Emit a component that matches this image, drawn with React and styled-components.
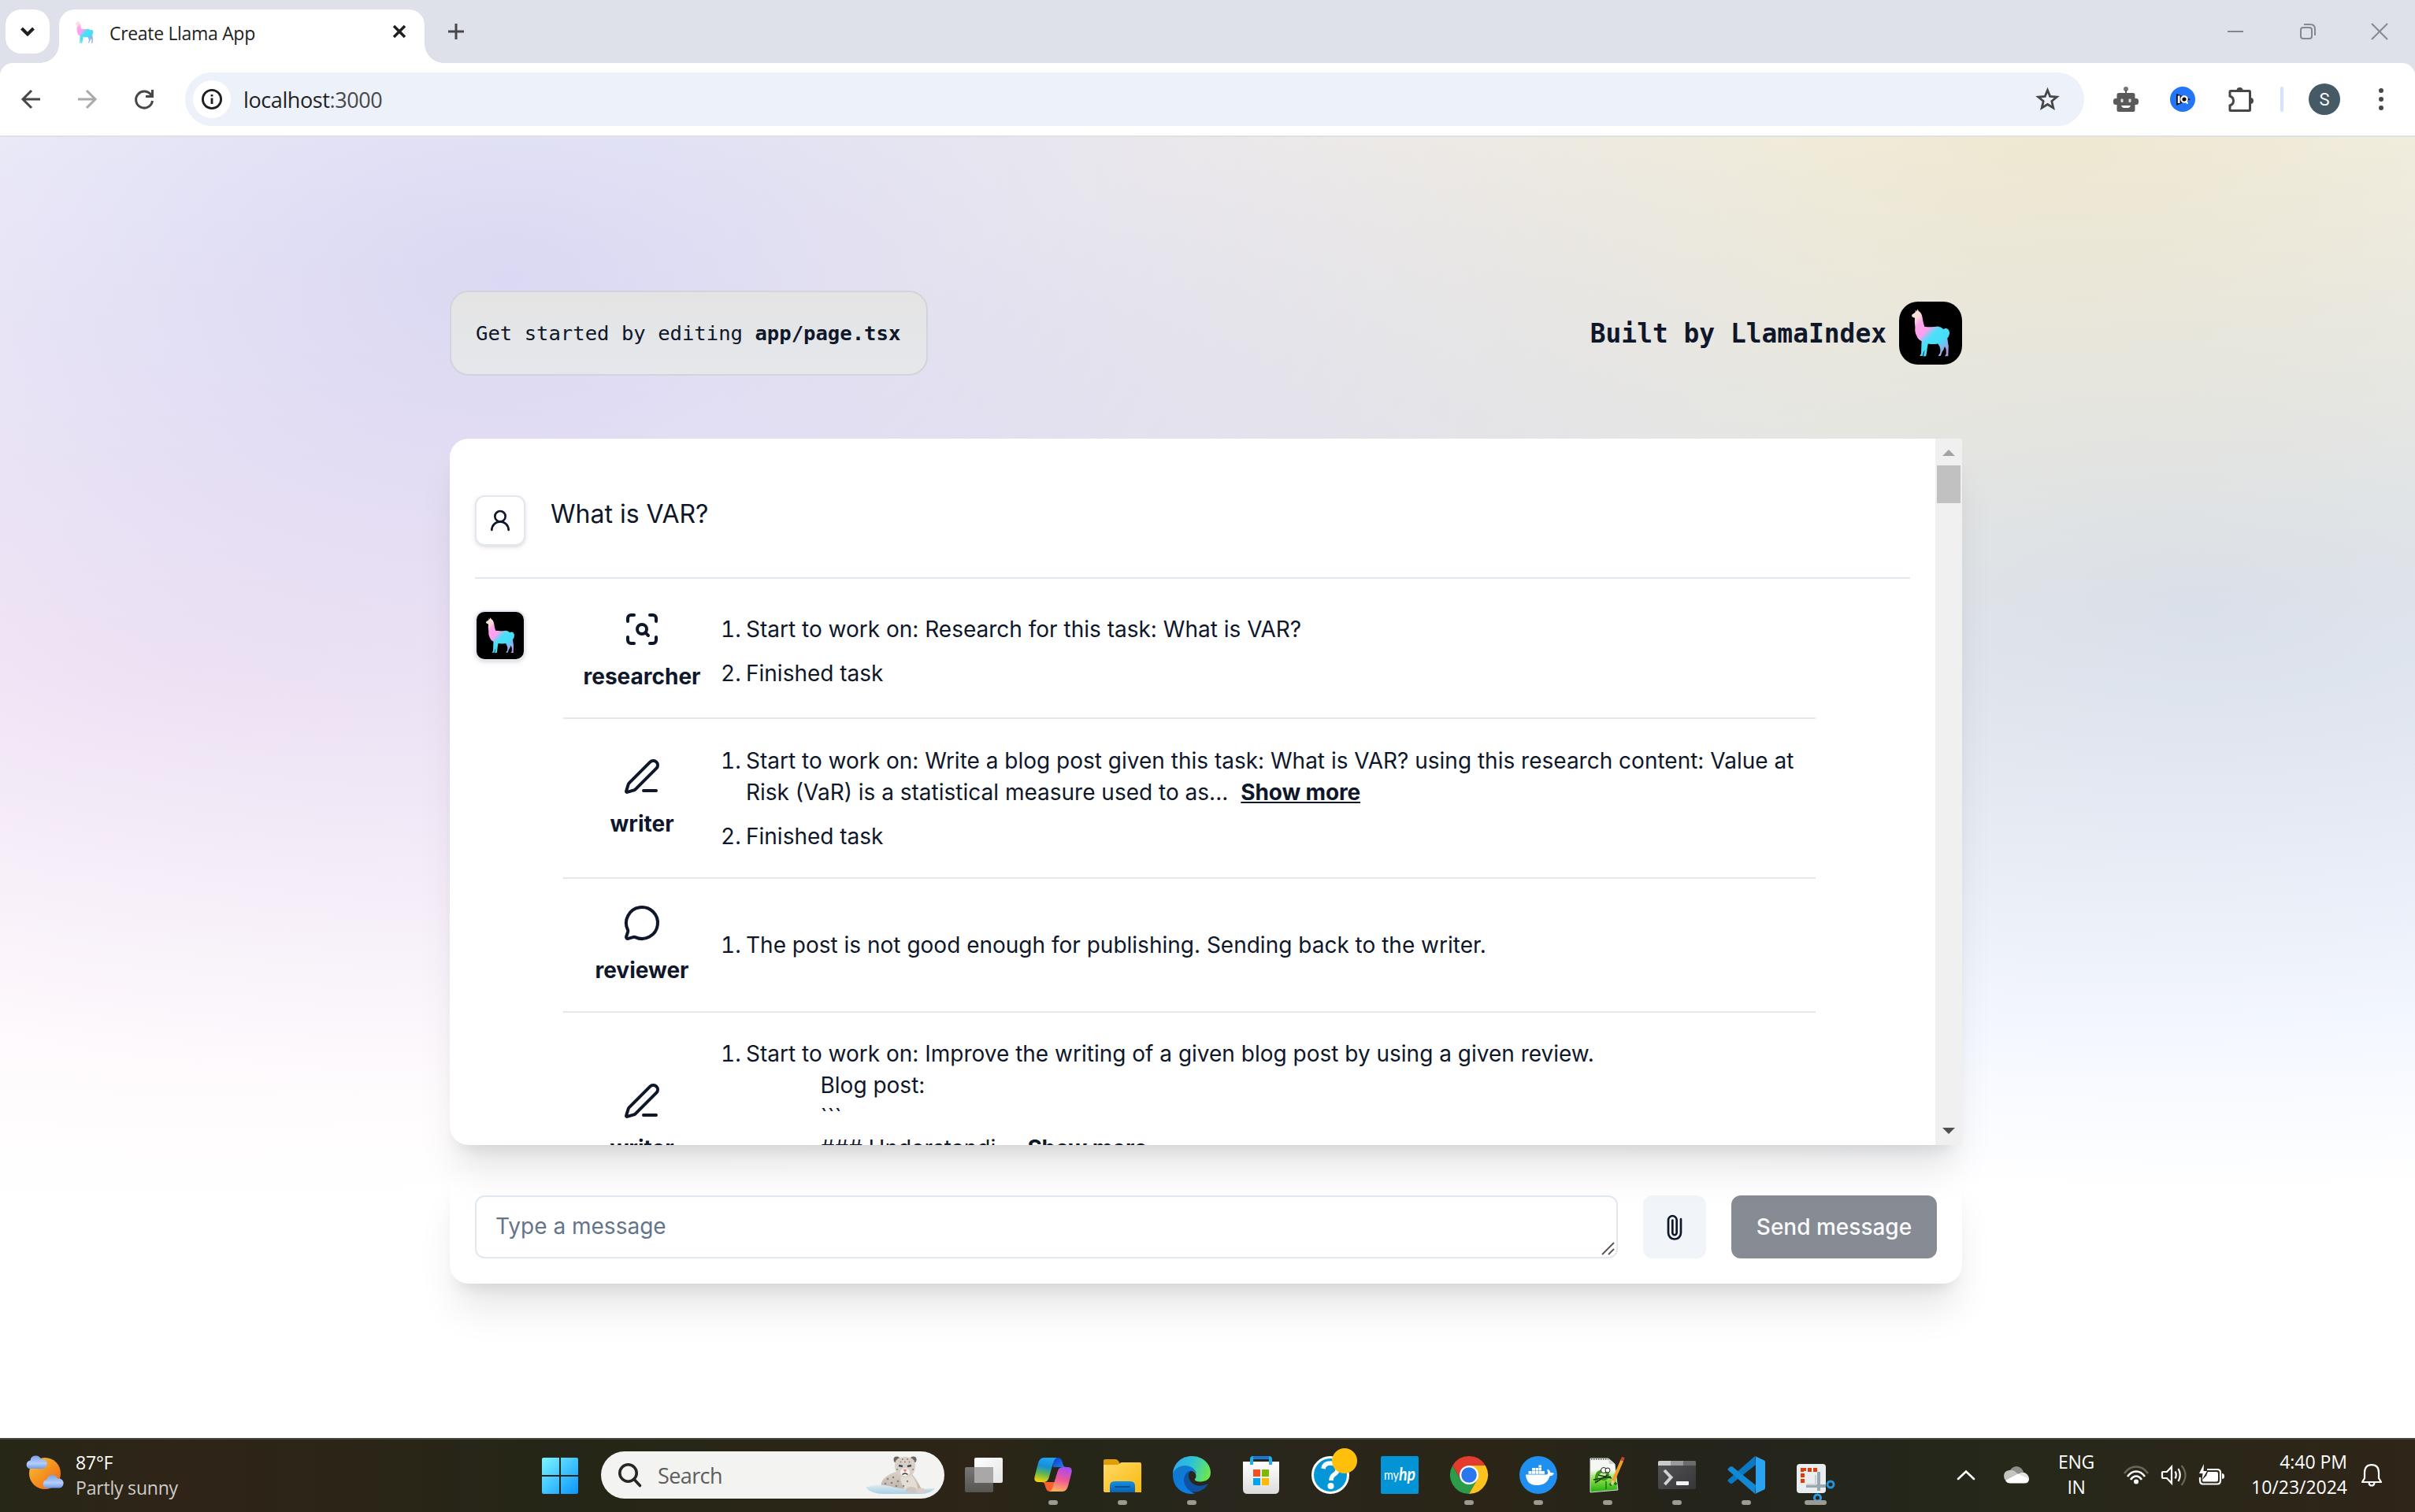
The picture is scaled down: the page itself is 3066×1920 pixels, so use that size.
import React from 'react';
import styled, { createGlobalStyle } from 'styled-components';
import { ScanSearch, PenLine, MessageCircle, UserRound } from 'lucide-react';

const ui = `'Open Sans', 'Noto Sans', sans-serif`;
const inter = `Inter, 'Liberation Sans', sans-serif`;
const mono = `'DejaVu Sans Mono', 'Liberation Mono', monospace`;

const GlobalStyle = createGlobalStyle`
  *, *::before, *::after { box-sizing: border-box; }
  html, body { margin: 0; padding: 0; background: #fff; }
  svg { display: block; flex: none; overflow: visible; }
  button { border: 0; padding: 0; background: none; font: inherit; color: inherit; }
`;

const Screen = styled.div`
  width: 3066px;
  height: 1920px;
  display: flex;
  flex-direction: column;
  overflow: hidden;
  font-family: ${ui};
`;

/* ---------- browser chrome ---------- */

const TabStrip = styled.header`
  height: 80px;
  background: #dee1e9;
  display: flex;
  align-items: flex-start;
  padding: 12px 35px 0 7px;
`;

const TabSearch = styled.button`
  width: 56px;
  height: 56px;
  border-radius: 20px;
  background: #fff;
  display: grid;
  place-items: center;
`;

const Tab = styled.div`
  position: relative;
  width: 464px;
  height: 68px;
  margin-left: 12px;
  padding: 0 24px 12px 20px;
  background: #fff;
  border-radius: 20px 20px 0 0;
  display: flex;
  align-items: center;
  &::before, &::after {
    content: '';
    position: absolute;
    bottom: 0;
    width: 24px;
    height: 24px;
  }
  &::before { left: -24px; background: radial-gradient(circle at 0 0, transparent 23.5px, #fff 24px); }
  &::after { right: -24px; background: radial-gradient(circle at 100% 0, transparent 23.5px, #fff 24px); }
`;

const TabTitle = styled.span`
  flex: 1;
  margin: 4px 0 0 20px;
  font-size: 23px;
  letter-spacing: -0.32px;
  line-height: 32px;
  color: #1f1f1f;
  white-space: nowrap;
`;

const NewTab = styled.div`
  margin: 18px auto 0 30px;
`;

const WindowControls = styled.div`
  display: flex;
  align-items: center;
  gap: 71.5px;
  margin-top: 18px;
`;

const ToolbarBack = styled.div`
  background: #dee1e9;
`;

const Toolbar = styled.div`
  height: 94px;
  background: #fff;
  border-bottom: 2px solid #dfe1e2;
  border-radius: 16px 16px 0 0;
  display: flex;
  align-items: center;
  padding: 0 40px 0 27px;
`;

const NavButtons = styled.div`
  display: flex;
  align-items: center;
  gap: 48px;
  width: 208px;
`;

const Omnibox = styled.div`
  width: 2411px;
  height: 68px;
  border-radius: 34px;
  background: #ecf1fa;
  display: flex;
  align-items: center;
  padding: 0 31px 0 10px;
`;

const SiteInfo = styled.div`
  width: 48px;
  height: 48px;
  border-radius: 50%;
  background: #fff;
  display: grid;
  place-items: center;
`;

const Url = styled.span`
  flex: 1;
  margin-left: 16px;
  font-size: 27px;
  letter-spacing: -0.4px;
  color: #1f1f1f;
  span { color: #474747; }
`;

const Extensions = styled.div`
  display: flex;
  align-items: center;
`;

const Extension = styled.div`
  margin-left: ${(p) => p.$gap}px;
`;

const Separator = styled.i`
  width: 4px;
  height: 32px;
  margin-left: 34px;
  border-radius: 2px;
  background: #d3e3fd;
`;

const Profile = styled.div`
  width: 40px;
  height: 40px;
  margin-left: 32px;
  border-radius: 50%;
  background: #455a64;
  color: #fff;
  font: 22px Roboto, sans-serif;
  display: grid;
  place-items: center;
`;

/* ---------- page ---------- */

const Page = styled.main`
  height: 1652px;
  padding: 195px 0 0 571px;
  background-color: #fff;
  background-image:
    radial-gradient(at 21% 11%, rgba(186, 186, 233, 0.53) 0, transparent 50%),
    radial-gradient(at 85% 0, hsla(46, 57%, 78%, 0.52) 0, transparent 50%),
    radial-gradient(at 91% 36%, rgba(194, 213, 255, 0.68) 0, transparent 50%),
    radial-gradient(at 8% 40%, rgba(251, 218, 239, 0.46) 0, transparent 50%);
  font-family: ${inter};
  color: #0f172a;
`;

const Column = styled.div`
  width: 1920px;
  display: flex;
  flex-direction: column;
`;

const PageHeader = styled.div`
  display: flex;
  justify-content: space-between;
  align-items: center;
  height: 108px;
  margin-bottom: 80px;
  font-family: ${mono};
`;

const Hint = styled.p`
  margin: 0;
  width: 607px;
  height: 108px;
  padding: 0 0 0 31px;
  border: 2px solid #d1d4da;
  border-radius: 24px;
  background: linear-gradient(#e4e4e4, #e5e7eb);
  font-size: 25.6px;
  line-height: 104px;
  white-space: nowrap;
`;

const BuiltBy = styled.div`
  display: flex;
  align-items: center;
  gap: 16px;
  font-size: 32.9px;
  font-weight: 700;
`;

const LogoTile = styled.div`
  width: ${(p) => p.$size}px;
  height: ${(p) => p.$size}px;
  border-radius: ${(p) => p.$radius}px;
  background: #000;
`;

const ChatCard = styled.section`
  position: relative;
  z-index: 1;
  height: 897px;
  display: flex;
  background: #fff;
  border-radius: 24px;
  box-shadow: 0 40px 50px -10px rgba(0, 0, 0, 0.1), 0 16px 20px -12px rgba(0, 0, 0, 0.1);
`;

const Messages = styled.div`
  width: 1886px;
  height: 897px;
  overflow: hidden;
  padding: 0 32px;
  border-radius: 24px 0 0 24px;
`;

const Message = styled.div`
  display: flex;
  align-items: flex-start;
  padding-top: ${(p) => p.$top}px;
`;

const UserMessage = styled(Message)`
  height: 178px;
  border-bottom: 2px solid #e2e8f0;
`;

const Avatar = styled.div`
  width: 64px;
  height: 64px;
  flex: none;
  border: 2px solid #e2e8f0;
  border-radius: 12px;
  background: #fff;
  box-shadow: 0 2px 6px rgba(0, 0, 0, 0.1), 0 2px 4px -2px rgba(0, 0, 0, 0.1);
  display: grid;
  place-items: center;
`;

const Question = styled.p`
  margin: -2px 0 0 32px;
  font-size: 32px;
  line-height: 52px;
`;

const Events = styled.div`
  width: 1590px;
  margin-left: 48px;
`;

const EventRow = styled.div`
  display: flex;
  align-items: center;
  padding-bottom: 32px;
  margin-bottom: 32px;
  border-bottom: 2px solid #e2e8f0;
`;

const Agent = styled.div`
  width: 200px;
  height: 104px;
  flex: none;
  display: flex;
  flex-direction: column;
  align-items: center;
  gap: 16px;
  font-size: 28px;
  line-height: 40px;
  font-weight: 700;
`;

const Steps = styled.ol`
  list-style: none;
  margin: 0;
  padding: 0;
  flex: 1;
  display: flex;
  flex-direction: column;
  gap: 16px;
  font-size: 28px;
  line-height: 40px;
`;

const Step = styled.li`
  display: grid;
  grid-template-columns: 32px 1fr;
  padding-top: ${(p) => (p.$offset ? 1 : 0)}px;
`;

const StepNumber = styled.span`
  font-variant-numeric: tabular-nums;
`;

const StepText = styled.span`
  white-space: pre-wrap;
`;

const ShowMore = styled.a`
  margin-left: 16px;
  font-weight: 700;
  letter-spacing: -0.15px;
  text-decoration: underline;
`;

const ScrollTrack = styled.div`
  width: 34px;
  height: 897px;
  background: #f0f0f0;
  display: flex;
  flex-direction: column;
  align-items: center;
  padding: 14px 0;
`;

const ScrollThumb = styled.i`
  width: 30px;
  height: 48px;
  margin: 12px 0 auto;
  background: #c1c1c1;
`;

const ScrollArrow = styled.i`
  width: 0;
  height: 0;
  border: 8px solid transparent;
  border-${(p) => (p.$down ? 'top' : 'bottom')}-color: ${(p) => (p.$down ? '#505050' : '#a3a3a3')};
  border-${(p) => (p.$down ? 'bottom' : 'top')}-width: 0;
`;

const Composer = styled.form`
  height: 144px;
  margin-top: 32px;
  padding: 32px;
  display: flex;
  gap: 32px;
  background: #fff;
  border-radius: 24px;
  box-shadow: 0 40px 50px -10px rgba(0, 0, 0, 0.1), 0 16px 20px -12px rgba(0, 0, 0, 0.1);
`;

const Field = styled.div`
  width: 1451px;
  height: 80px;
  display: flex;
  justify-content: space-between;
  align-items: flex-end;
  border: 2px solid #e2e8f0;
  border-radius: 12px;
  padding: 0 2px 2px 24px;
  font-size: 28px;
  line-height: 76px;
  color: #64748b;
`;

const Placeholder = styled.span`
  height: 75px;
`;

const Attach = styled.button`
  width: 80px;
  height: 80px;
  border-radius: 12px;
  background: #f1f5f9;
  display: grid;
  place-items: center;
  color: #0f172a;
`;

const Send = styled.button`
  width: 261px;
  height: 80px;
  border-radius: 12px;
  background: #878b94;
  color: #fbfcfd;
  font-size: 28px;
  font-weight: 500;
  white-space: nowrap;
`;

/* ---------- taskbar ---------- */

const Taskbar = styled.footer`
  height: 94px;
  border-top: 2px solid #48483d;
  background: linear-gradient(90deg, #272717 0, #2f2418 240px, #252617 700px, #2d2517 1250px, #252617 1350px, #29261d 1560px, #2a2516 1900px, #24241c 2200px, #26281a 2560px, #2f2518 3066px);
  display: grid;
  grid-template-columns: 688px 1fr auto;
  align-items: start;
  color: #fff;
`;

const Weather = styled.div`
  display: flex;
  gap: 14px;
  padding: 19px 0 0 33px;
`;

const WeatherText = styled.div`
  margin-top: -6px;
  font-size: 23px;
  line-height: 32px;
  letter-spacing: -0.2px;
  small { display: block; font-size: inherit; color: #cfcdc8; }
`;

const Apps = styled.nav`
  display: flex;
  align-items: flex-start;
`;

const StartButton = styled.div`
  width: 75px;
  padding-top: 23px;
`;

const SearchBox = styled.div`
  width: 436px;
  height: 60px;
  margin: 15px 6px 0 0;
  padding: 0 10px 0 22px;
  border-radius: 30px;
  background: #f3f3f1;
  display: flex;
  align-items: center;
  color: #5d5d5d;
  font-size: 27px;
  letter-spacing: -0.6px;
  span { flex: 1; margin-left: 21px; }
`;

const AppSlot = styled.div`
  width: 88px;
  height: 89px;
  padding-top: 21px;
  display: flex;
  flex-direction: column;
  align-items: center;
  justify-content: space-between;
`;

const Running = styled.i`
  width: ${(p) => (p.$active ? 28 : 12)}px;
  height: 6px;
  margin-bottom: 6px;
  border-radius: 3px;
  background: #9c9a93;
`;

const Tray = styled.div`
  display: flex;
  align-items: center;
  height: 90px;
  padding-right: 42px;
`;

const TrayItem = styled.div`
  margin-left: ${(p) => p.$gap}px;
`;

const TrayText = styled.div`
  width: ${(p) => p.$width}px;
  margin: 0 0 3px ${(p) => p.$gap}px;
  font-size: 23px;
  line-height: 32px;
  letter-spacing: ${(p) => p.$track || 0}px;
  text-align: ${(p) => p.$align};
  white-space: nowrap;
`;

/* ---------- drawings ---------- */

const Llama = ({ size, height = size, id, box = '0 0 80 80' }) => (
  <svg width={size} height={height} viewBox={box}>
    <defs>
      <linearGradient id={id} gradientUnits="userSpaceOnUse" x1="22" y1="19" x2="66" y2="62">
        <stop offset="0" stopColor="#fadfda" />
        <stop offset="0.04" stopColor="#fbd6dc" />
        <stop offset="0.14" stopColor="#ffa6ea" />
        <stop offset="0.34" stopColor="#ff9ff0" />
        <stop offset="0.5" stopColor="#4be0f7" />
        <stop offset="0.7" stopColor="#45defa" />
        <stop offset="0.95" stopColor="#b297e0" />
      </linearGradient>
    </defs>
    <path
      fill={`url(#${id})`}
      d="M20.6 13.6 20.9 10.8 22.3 12.6 23.4 9.6 24.8 12Q28.6 14 29.6 20Q30.5 27 32.2 31.8Q41 33 49.4 31.6Q54 32.2 56.3 35Q59.5 32.8 62.2 35Q65 38.5 63.6 42.5Q62.8 45 61.3 46.5Q62 52 62.8 56.5L62.3 69.2 58 69.3 59.8 66.5 59.7 60.5 58 57Q56.5 61.5 54.6 64L52.8 69 49.6 69 52 65.2Q53.6 59.5 49.4 53.4Q43 54.5 36.8 53.4Q35.6 58 35.3 63L34.2 69.3 30.8 69.4 32.6 61.5 30.8 65 30 69 26.2 68.9 28 66 28.6 50.2Q23.8 48 22.6 44Q19.6 39 20.4 32.5Q19.4 26 20 20.8L17.3 19.8Q15.6 18.6 16.2 16.8Z"
    />
  </svg>
);

const Stroke = ({ w, h = w, color = '#474747', sw = 3, cap = 'butt', children }) => (
  <svg width={w} height={h} viewBox={`0 0 ${w} ${h}`} fill="none" stroke={color} strokeWidth={sw} strokeLinecap={cap}>
    {children}
  </svg>
);

const Robot = () => (
  <svg width="32" height="32" viewBox="0 0 32 32" fill="#5a5a5a">
    <circle cx="16" cy="3" r="3" fill="#777" />
    <rect x="15" y="4" width="2" height="5" />
    <rect x="4.500" y="8" width="23" height="24" rx="2.500" />
    <rect x="0" y="15" width="32" height="8" rx="3" />
    <rect x="9.500" y="15.500" width="3" height="4.500" rx="1" fill="#ddd" />
    <rect x="19.500" y="15.500" width="3" height="4.500" rx="1" fill="#ddd" />
    <path d="M10 24H22Q21 27 19 27H13Q11 27 10 24Z" fill="#fff" />
  </svg>
);

const IqBadge = () => (
  <svg width="32" height="32" viewBox="0 0 32 32">
    <circle cx="16" cy="16" r="16" fill="#2575f8" />
    <path d="M8 9 26 16 8 24Z" fill="#05070c" />
    <rect x="9.800" y="11.500" width="2.800" height="9.500" fill="#fff" />
    <circle cx="18" cy="16" r="3.700" fill="#05070c" stroke="#fff" strokeWidth="2.200" />
    <path d="M19.500 18.500 22.500 21.500" stroke="#fff" strokeWidth="2.200" />
  </svg>
);

const Puzzle = () => (
  <svg width="32" height="32" viewBox="0 0 32 32">
    <path d="M2 6.500Q2 5.500 3 5.500H27Q27.500 5.500 27.500 6.500V29.500Q27.500 30.500 26.500 30.500H3Q2 30.500 2 29.500V24Q6.500 22.500 6.500 18Q6.500 13.500 2 12Z" fill="none" stroke="#474747" strokeWidth="3" />
    <path d="M10.500 5A4 4 0 0 1 18.500 5ZM28 14A4 4 0 0 1 28 22Z" fill="#474747" />
  </svg>
);

const WeatherIcon = () => (
  <svg width="49" height="46" viewBox="0 0 49 46">
    <defs>
      <linearGradient id="sun" x1="0" y1="0" x2="1" y2="1"><stop offset="0.2" stopColor="#f7b02c" /><stop offset="1" stopColor="#f0600e" /></linearGradient>
      <linearGradient id="cloud" x1="0" y1="0" x2="0" y2="1"><stop offset="0" stopColor="#7c9fe8" /><stop offset="0.6" stopColor="#b4cffa" /><stop offset="1" stopColor="#7199e8" /></linearGradient>
    </defs>
    <circle cx="24" cy="24" r="20" fill="url(#sun)" />
    <path d="M5 18A5.500 5.500 0 0 1 6.500 7.500A7 7 0 0 1 20 6A6 6 0 0 1 23 18Z" fill="url(#cloud)" transform="translate(-1 0)" />
    <path d="M5 18A5.500 5.500 0 0 1 6.500 7.500A7 7 0 0 1 20 6A6 6 0 0 1 23 18Z" fill="url(#cloud)" transform="translate(20 24.500)" />
  </svg>
);

const WindowsLogo = () => (
  <svg width="46" height="46" viewBox="0 0 46 46">
    <defs><linearGradient id="win" gradientUnits="userSpaceOnUse" x1="0" y1="0" x2="46" y2="46"><stop offset="0" stopColor="#7df5ff" /><stop offset="0.5" stopColor="#42c4ff" /><stop offset="1" stopColor="#0a96ff" /></linearGradient></defs>
    <path fill="url(#win)" d="M2 0H22V22H0V2Q0 0 2 0ZM24 0H44Q46 0 46 2V22H24ZM0 24H22V46H2Q0 46 0 44ZM24 24H46V44Q46 46 44 46H24Z" />
  </svg>
);

const Leopard = () => (
  <svg width="90" height="48" viewBox="0 0 90 48">
    <defs>
      <linearGradient id="ice" x1="0" y1="0" x2="0" y2="1"><stop offset="0" stopColor="#dcebf4" /><stop offset="1" stopColor="#a9cfe4" /></linearGradient>
      <linearGradient id="fur" x1="0" y1="0" x2="0" y2="1"><stop offset="0" stopColor="#d9cfc4" /><stop offset="1" stopColor="#bcb0a8" /></linearGradient>
    </defs>
    <path d="M20 44C17 32 24 25 38 20L58 22C66 30 68 38 74 46L40 47Z" fill="url(#fur)" />
    <path d="M0 40Q14 34 30 38Q48 44 88 41Q82 48 70 48H22Q8 48 0 40Z" fill="url(#ice)" />
    <path d="M44 24H58Q66 34 66 42L50 43Q44 34 44 24Z" fill="#e4ddd5" />
    <ellipse cx="58" cy="43" rx="7" ry="4" fill="#cfc5bd" />
    <ellipse cx="70" cy="44" rx="6" ry="3.500" fill="#d8cfc8" />
    <circle cx="39.500" cy="4.500" r="4" fill="#6c655f" />
    <circle cx="60.500" cy="4.500" r="4" fill="#6c655f" />
    <path d="M37 12Q37 1 50 1Q63 1 63 12Q63 26 50 27Q37 26 37 12Z" fill="#d8d0c7" />
    <ellipse cx="50" cy="20.500" rx="6" ry="5" fill="#f4f0ec" />
    <path d="M42 12L47 13M58 12L53 13" stroke="#38495c" strokeWidth="2.600" />
    <path d="M47.500 17H52.500L50 20.500Z" fill="#e8796f" />
    <path d="M46.500 23.500Q50 20.500 53.500 23.500" fill="none" stroke="#33302f" strokeWidth="1.500" />
    <g fill="#8a8079">
      <circle cx="47" cy="4" r="1" /><circle cx="53" cy="4" r="1" /><circle cx="50" cy="7.500" r="1" /><circle cx="44.500" cy="7.500" r="1" /><circle cx="55.500" cy="7.500" r="1" /><circle cx="40" cy="17" r="1" /><circle cx="60" cy="17" r="1" />
      <circle cx="28" cy="29" r="1.300" /><circle cx="35" cy="27" r="1.300" /><circle cx="25" cy="35" r="1.300" /><circle cx="33" cy="34" r="1.300" /><circle cx="41" cy="32" r="1.300" /><circle cx="53" cy="32" r="1.200" /><circle cx="39" cy="38" r="1.300" /><circle cx="48" cy="38" r="1.200" />
    </g>
  </svg>
);

const TaskView = () => (
  <svg width="48" height="48" viewBox="0 0 48 48">
    <defs>
      <linearGradient id="tvw" x1="0" y1="0" x2="1" y2="1"><stop offset="0" stopColor="#fff" /><stop offset="1" stopColor="#e4e4e4" /></linearGradient>
      <linearGradient id="tvg" x1="0" y1="0" x2="0" y2="1"><stop offset="0" stopColor="#777674" /><stop offset="1" stopColor="#565552" /></linearGradient>
    </defs>
    <rect x="0" y="14" width="36" height="32" rx="2" fill="url(#tvg)" />
    <rect x="12" y="2" width="36" height="32" rx="2" fill="url(#tvw)" />
    <path d="M12 14H36V34H14Q12 34 12 32Z" fill="#a9a8a6" />
  </svg>
);

const Copilot = () => (
  <svg width="48" height="48" viewBox="0 0 48 48">
    <defs>
      <linearGradient id="cpa" x1="0.500" y1="0" x2="0.300" y2="1"><stop offset="0" stopColor="#1fa5ee" /><stop offset="0.350" stopColor="#168fd8" /><stop offset="0.650" stopColor="#5fb552" /><stop offset="1" stopColor="#fbd20a" /></linearGradient>
      <linearGradient id="cpb" x1="0.600" y1="0" x2="0.400" y2="1"><stop offset="0" stopColor="#a64bf0" /><stop offset="0.500" stopColor="#f0569a" /><stop offset="1" stopColor="#fdb25a" /></linearGradient>
      <linearGradient id="cpc" x1="0" y1="0" x2="1" y2="1"><stop offset="0" stopColor="#1536c8" /><stop offset="1" stopColor="#1b8af2" /></linearGradient>
    </defs>
    <path d="M24 2H30Q34 2 35.500 7L37 12Q38 14 41 14H24Z" fill="url(#cpc)" />
    <path d="M26 45H20Q16 45 14.500 40L13 35Q12 33 9 33H26Z" fill="#f9602f" />
    <path d="M23 14H31L25.500 33H17.500Z" fill="#272617" />
    <path d="M12 2H29Q25.500 3 24 9L18.500 28Q17 33 12 33H5Q-1 33 .6 26L5 9Q7 2 12 2Z" fill="url(#cpa)" />
    <path d="M36 45H19Q22.500 44 24 38L29.500 20Q31 14 36 14H43Q49 14 47.400 21L43 38Q41 45 36 45Z" fill="url(#cpb)" />
  </svg>
);

const Folder = () => (
  <svg width="48" height="48" viewBox="0 0 48 48">
    <defs>
      <linearGradient id="fo" x1="0" y1="0" x2="1" y2="1"><stop offset="0" stopColor="#ffd968" /><stop offset="1" stopColor="#f9b90c" /></linearGradient>
      <linearGradient id="fb" x1="0" y1="0" x2="0" y2="1"><stop offset="0" stopColor="#1390e0" /><stop offset="1" stopColor="#0862b5" /></linearGradient>
    </defs>
    <path d="M0 6Q0 4 2 4H15Q18 4 20 8L22 12H0Z" fill="#e19d06" />
    <path d="M0 11H17Q19 11 20.500 9.500Q21.500 8 23 8H46Q48 8 48 10V46H2Q0 46 0 44Z" fill="url(#fo)" />
    <path d="M8 46V38Q8 32 14 32H34Q40 32 40 38V46Z" fill="url(#fb)" />
    <rect x="14" y="38" width="20" height="2" rx="1" fill="#0a4c92" />
  </svg>
);

const Edge = () => (
  <svg width="48" height="48" viewBox="0 0 48 48">
    <defs>
      <linearGradient id="eg" x1="0" y1="0.300" x2="1" y2="0.600"><stop offset="0" stopColor="#2fa6ee" /><stop offset="0.450" stopColor="#2fc3d6" /><stop offset="1" stopColor="#6be84a" /></linearGradient>
      <linearGradient id="eb" x1="0" y1="0" x2="0.600" y2="1"><stop offset="0" stopColor="#1277c8" /><stop offset="1" stopColor="#0a7fe6" /></linearGradient>
    </defs>
    <path d="M0 22C1 9 11 0 24 0C38 0 48 10 48 21C48 29 42 32.500 35 32.500C30 32.500 27 31 28 29C30 27 30 24 28 21C25 17 12 12 0 22Z" fill="url(#eg)" />
    <path d="M0 22C4 12 17 9 25 15C28 17.500 30 20 30 22C26 17 18 18 16 25C14 34 18 44 28 47.500C13 50 -1 40 0 22Z" fill="url(#eb)" />
    <path d="M24 18C14 20 10 32 19 42C27 50 39 44 44.500 36C44 35 43 35.500 42 36C31 41 20 34 20 25C20 22 21.500 19.500 24 18Z" fill="#0f52a4" />
  </svg>
);

const Store = () => (
  <svg width="48" height="48" viewBox="0 0 48 48">
    <defs><linearGradient id="st" x1="0" y1="0" x2="0" y2="1"><stop offset="0" stopColor="#fff" /><stop offset="1" stopColor="#dcdcdc" /></linearGradient></defs>
    <path d="M1 7H47V42Q47 48 41 48H7Q1 48 1 42Z" fill="url(#st)" />
    <path d="M12 11V4Q12 2 14 2H34Q36 2 36 4V11" fill="none" stroke="#1fb0f4" strokeWidth="4" />
    <path d="M14 2H34" stroke="#1673d6" strokeWidth="3.500" />
    <path d="M14 17H23V26H14Z" fill="#f25022" /><path d="M25 17H34V26H25Z" fill="#7fba00" />
    <path d="M14 28H23V37H14Z" fill="#00a4ef" /><path d="M25 28H34V37H25Z" fill="#ffb900" />
  </svg>
);

const Help = () => (
  <svg width="48" height="48" viewBox="0 0 48 48">
    <circle cx="24" cy="24" r="22.500" fill="#0496d6" stroke="#fff" strokeWidth="3" />
    <path d="M15 16Q16 9 24 9Q33 9 33 17Q33 21 28 24Q25 26 25 31" fill="none" stroke="#fff" strokeWidth="5.500" />
    <circle cx="24.500" cy="38" r="4" fill="#fff" />
    <circle cx="42" cy="6" r="16" fill="#ffbf0b" />
  </svg>
);

const MyHp = () => (
  <svg width="48" height="48" viewBox="0 0 48 48">
    <rect width="48" height="48" rx="2" fill="#0294d4" />
    <text x="4" y="30" fill="#fff" fontFamily="Lato, sans-serif" fontSize="17" textLength="19" lengthAdjust="spacingAndGlyphs">my</text>
    <text x="23" y="31" fill="#fff" fontFamily="Lato, sans-serif" fontStyle="italic" fontWeight="700" fontSize="23" textLength="21" lengthAdjust="spacingAndGlyphs">hp</text>
  </svg>
);

const Chrome = () => (
  <svg width="48" height="48" viewBox="0 0 48 48">
    <path d="M13.600 30 3.200 12A24 24 0 0 0 24 48L34.400 30Z" fill="#2a9c4a" />
    <path d="M3.200 12A24 24 0 0 1 44.800 12H24L13.600 30Z" fill="#e33b2e" />
    <path d="M34.400 30 24 48A24 24 0 0 0 44.800 12H24Z" fill="#fcc31e" />
    <circle cx="24" cy="24" r="12" fill="#fff" />
    <circle cx="24" cy="24" r="9.800" fill="#2b78ee" />
  </svg>
);

const Docker = () => (
  <svg width="48" height="48" viewBox="0 0 48 48">
    <circle cx="24" cy="24" r="24" fill="#1f8ff0" />
    <g fill="#fff">
      <path d="M8 23.500H34Q37 23 36 20.500Q34.500 18 36 16.500Q39 18 39.500 21Q42 20.500 44 22Q42.500 25 38.500 25.500Q35 37 22 37Q9 37 8 23.500Z" />
      <path d="M11.500 19H15.500V22.700H11.500ZM16 19H20V22.700H16ZM20.500 19H24.500V22.700H20.500ZM25 19H29V22.700H25ZM29 19H32V22.700H29ZM16 15H20V18.500H16ZM20.500 15H24.500V18.500H20.500ZM25 15H28V18.500H25ZM24.500 11.500H28V14.500H24.500Z" />
    </g>
  </svg>
);

const NotepadPP = () => (
  <svg width="48" height="48" viewBox="0 0 48 48">
    <defs><linearGradient id="np" x1="0" y1="0" x2="0" y2="1"><stop offset="0.350" stopColor="#f4f7f2" /><stop offset="0.600" stopColor="#8fe04a" /><stop offset="1" stopColor="#1fae0e" /></linearGradient></defs>
    <path d="M2 3H25L33 10 37 43 2 46Z" fill="url(#np)" stroke="#ddd" />
    <path d="M25 3 26 10 33 10Z" fill="#cfd3cf" />
    <path d="M3 4H25" stroke="#777" strokeWidth="2" strokeDasharray="1.500 1.500" />
    <path d="M10 33Q8 20 18 19Q25 19 24 26Q20 31 16 28" fill="none" stroke="#3d9a17" strokeWidth="4" />
    <path d="M6 30 28 26M8 34 24 24M12 24 29 28" stroke="#1d3a12" strokeWidth="1.500" />
    <circle cx="19" cy="18" r="3.500" fill="#fff" stroke="#222" />
    <circle cx="24" cy="18" r="3" fill="#fff" stroke="#222" />
    <path d="M22 32V42M26 36H30M28 34V38M32 35H36M34 33V37" stroke="#17720b" strokeWidth="1.500" />
    <path d="M42.500 5 30 34" stroke="#f1a222" strokeWidth="4" />
    <path d="M44 1.500 42 6" stroke="#c7423d" strokeWidth="4" />
    <path d="M31 31 29.500 36.500" stroke="#e8caa0" strokeWidth="3" />
  </svg>
);

const Terminal = () => (
  <svg width="48" height="48" viewBox="0 0 48 48">
    <defs><linearGradient id="te" x1="0" y1="0" x2="1" y2="1"><stop offset="0" stopColor="#545456" /><stop offset="1" stopColor="#373739" /></linearGradient></defs>
    <rect y="6" width="48" height="36" rx="2" fill="url(#te)" />
    <path d="M0 12V8Q0 6 2 6H16V12Z" fill="#cacaca" /><path d="M16 6H32V12H16Z" fill="#9a9a9a" /><path d="M32 6H46Q48 6 48 8V12H32Z" fill="#6b6b6b" />
    <path d="M8 18 16.500 27 8.500 36" fill="none" stroke="#d2d2d2" strokeWidth="4" />
    <rect x="23" y="32" width="16" height="5" rx="1" fill="#f2f2f2" />
  </svg>
);

const VsCode = () => (
  <svg width="48" height="48" viewBox="0 0 48 48">
    <path d="M36 11 6.500 34.500Q5 35.500 3.500 34.500L.8 32Q0 31 1 30L35 0Z" fill="#0a78c4" />
    <path d="M36 37 6.500 13.500Q5 12.500 3.500 13.500L.8 16Q0 17 1 18L35 48Z" fill="#1389d6" />
    <path d="M35 0 46.500 5.200Q48 6 48 8V40Q48 42 46.500 42.800L35 48Q36 47 36 45V3Q36 1 35 0Z" fill="#28a4f2" />
  </svg>
);

const Snip = () => (
  <svg width="48" height="48" viewBox="0 0 48 48">
    <rect x="0" y="10" width="37" height="37" rx="4" fill="#e9edf0" />
    <path d="M5 15H12V19H9V20H5ZM14 15H19V20H14ZM21 15H26V20H21ZM5 22H10V27H5ZM5 29H10V34H5Z" fill="#db3d0c" />
    <path d="M28 20V44M12 38H37" stroke="#9ba7ae" strokeWidth="4" fill="none" />
    <path d="M24 24V36H12" stroke="#cdd3d6" strokeWidth="2" fill="none" />
    <circle cx="43" cy="36" r="4" fill="none" stroke="#2492d8" strokeWidth="3" />
    <circle cx="26.500" cy="53" r="4" fill="none" stroke="#2a9be8" strokeWidth="3" />
  </svg>
);

const apps = [
  { icon: TaskView },
  { icon: Copilot, running: true },
  { icon: Folder, running: true },
  { icon: Edge, running: true },
  { icon: Store },
  { icon: Help },
  { icon: MyHp },
  { icon: Chrome, running: true },
  { icon: Docker, running: true },
  { icon: NotepadPP, running: true },
  { icon: Terminal, running: true },
  { icon: VsCode, running: true },
  { icon: Snip, running: true, active: true },
];

const indent = ' '.repeat(12);

const events = [
  { icon: ScanSearch, name: 'researcher', steps: [{ text: 'Start to work on: Research for this task: What is VAR?' }, { text: 'Finished task' }] },
  {
    icon: PenLine,
    name: 'writer',
    steps: [
      { text: 'Start to work on: Write a blog post given this task: What is VAR? using this research content: Value at Risk (VaR) is a statistical measure used to as...', more: true, offset: true },
      { text: 'Finished task' },
    ],
  },
  { icon: MessageCircle, name: 'reviewer', steps: [{ text: 'The post is not good enough for publishing. Sending back to the writer.' }] },
  {
    icon: PenLine,
    name: 'writer',
    steps: [
      { text: `Start to work on: Improve the writing of a given blog post by using a given review.\n${indent}Blog post:\n${indent}\`\`\`\n${indent}### Understandi...`, more: true },
      { text: 'Finished task' },
    ],
  },
];

function BrowserChrome() {
  return (
    <>
      <TabStrip>
        <TabSearch>
          <Stroke w={18} h={12} color="#1f1f1f" sw={4}><path d="M1.500 2 9 9.500 16.500 2" /></Stroke>
        </TabSearch>
        <Tab>
          <Llama size={24} height={29} id="fav" box="15.5 9 49 61" />
          <TabTitle>Create Llama App</TabTitle>
          <Stroke w={16} color="#1f1f1f" sw={3.4}><path d="M1 1 15 15M15 1 1 15" /></Stroke>
        </Tab>
        <NewTab><Stroke w={20} color="#474747"><path d="M10 0V20M0 10H20" /></Stroke></NewTab>
        <WindowControls>
          <Stroke w={20} color="#86888c" sw={2}><path d="M0 10H20" /></Stroke>
          <Stroke w={20} color="#86888c" sw={2}>
            <rect x="1" y="5" width="14" height="14" rx="3" />
            <path d="M5 1H13Q19 1 19 7V15" />
          </Stroke>
          <Stroke w={20} color="#86888c" sw={2}><path d="M0 0 20 20M20 0 0 20" /></Stroke>
        </WindowControls>
      </TabStrip>
      <ToolbarBack>
        <Toolbar>
          <NavButtons>
            <Stroke w={24}><path d="M24 12H2M13 1 2 12 13 23" /></Stroke>
            <Stroke w={24} color="#a9a9a9"><path d="M0 12H22M11 1 22 12 11 23" /></Stroke>
            <Stroke w={24}><path d="M21 7A10.500 10.500 0 1 0 22.500 14M22.500 0V8.500H14" /></Stroke>
          </NavButtons>
          <Omnibox>
            <SiteInfo>
              <Stroke w={26} color="#1f1f1f" sw={2.8}>
                <circle cx="13" cy="13" r="11.600" />
                <path d="M13 11.500V19M13 7V9.600" />
              </Stroke>
            </SiteInfo>
            <Url>localhost<span>:3000</span></Url>
            <Stroke w={31} h={30} sw={2.800}>
              <path d="M15.500 3.500 18.700 11.300 27.300 12 20.800 17.500 22.800 26 15.500 21.500 8.200 26 10.200 17.500 3.700 12 12.300 11.300Z" />
            </Stroke>
          </Omnibox>
          <Extensions>
            <Extension $gap={37}><Robot /></Extension>
            <Extension $gap={40}><IqBadge /></Extension>
            <Extension $gap={42}><Puzzle /></Extension>
            <Separator />
            <Profile>S</Profile>
            <Extension $gap={49}>
              <svg width="6" height="30" viewBox="0 0 6 30" fill="#474747">
                <circle cx="3" cy="4" r="3" /><circle cx="3" cy="15" r="3" /><circle cx="3" cy="26" r="3" />
              </svg>
            </Extension>
          </Extensions>
        </Toolbar>
      </ToolbarBack>
    </>
  );
}

function ChatPage() {
  return (
    <Page>
      <Column>
        <PageHeader>
          <Hint>Get started by editing <b>app/page.tsx</b></Hint>
          <BuiltBy>
            Built by LlamaIndex
            <LogoTile $size={80} $radius={24}><Llama size={80} id="logo" /></LogoTile>
          </BuiltBy>
        </PageHeader>
        <ChatCard>
          <Messages>
            <UserMessage $top={72}>
              <Avatar><UserRound size={32} strokeWidth={2} /></Avatar>
              <Question>What is VAR?</Question>
            </UserMessage>
            <Message $top={40}>
              <Avatar><LogoTile $size={60} $radius={10}><Llama size={60} id="bot" /></LogoTile></Avatar>
              <Events>
                {events.map(({ icon: Icon, name, steps }, i) => (
                  <EventRow key={i}>
                    <Agent><Icon size={48} strokeWidth={2} />{name}</Agent>
                    <Steps>
                      {steps.map((s, n) => (
                        <Step key={n} $offset={s.offset}>
                          <StepNumber>{n + 1}.</StepNumber>
                          <StepText>{s.text}{s.more && <ShowMore>Show more</ShowMore>}</StepText>
                        </Step>
                      ))}
                    </Steps>
                  </EventRow>
                ))}
              </Events>
            </Message>
          </Messages>
          <ScrollTrack>
            <ScrollArrow />
            <ScrollThumb />
            <ScrollArrow $down />
          </ScrollTrack>
        </ChatCard>
        <Composer>
          <Field>
            <Placeholder>Type a message</Placeholder>
            <Stroke w={17} h={17} color="#555" sw={1.800}><path d="M1 16 16 1M9 16 16 9" /></Stroke>
          </Field>
          <Attach type="button">
            <svg width="32" height="32" viewBox="0 0 24 24" fill="none" stroke="currentColor" strokeWidth="2" strokeLinecap="round" strokeLinejoin="round">
              <path transform="rotate(-45 12 12)" d="m21.440 11.050-9.190 9.190a6 6 0 0 1-8.490-8.490l8.570-8.570A4 4 0 1 1 18 8.840l-8.590 8.570a2 2 0 0 1-2.830-2.830l8.490-8.480" />
            </svg>
          </Attach>
          <Send type="button">Send message</Send>
        </Composer>
      </Column>
    </Page>
  );
}

function WindowsTaskbar() {
  return (
    <Taskbar>
      <Weather>
        <WeatherIcon />
        <WeatherText>87°F<small>Partly sunny</small></WeatherText>
      </Weather>
      <Apps>
        <StartButton><WindowsLogo /></StartButton>
        <SearchBox>
          <Stroke w={29} h={30} color="#262626" sw={3.600} cap="round"><circle cx="12.500" cy="12.500" r="10.700" /><path d="M20 20.500 27.500 28.500" /></Stroke>
          <span>Search</span>
          <Leopard />
        </SearchBox>
        {apps.map(({ icon: Icon, running, active }, i) => (
          <AppSlot key={i}><Icon />{running && <Running $active={active} />}</AppSlot>
        ))}
      </Apps>
      <Tray>
        <TrayItem><Stroke w={22} h={12} color="#fff" sw={2.600} cap="round"><path d="M1 11 11 1.500 21 11" /></Stroke></TrayItem>
        <TrayItem $gap={37}>
          <svg width="32" height="22" viewBox="0 0 32 22">
            <circle cx="16" cy="9" r="9" fill="#8e8e88" />
            <path d="M7 5Q13 4 18 10L10 20Q0 20 0 12Q0 6 7 5Z" fill="#c4c4c1" />
            <path d="M18 10Q24 6 28 9Q32 12 32 16L16 15Z" fill="#e2e2e0" />
            <path d="M2 18 18 9.500 32 16Q32 21.500 26 21.500H8Q4 21.500 2 18Z" fill="#fff" />
          </svg>
        </TrayItem>
        <TrayText $gap={31} $width={58} $align="center" $track={-0.3}>ENG<br />IN</TrayText>
        <TrayItem $gap={31}>
          <Stroke w={32} h={24} color="#fff" sw={2.600}>
            <path d="M1 10Q7 1.500 16 1.500Q25 1.500 31 10" stroke="#6a665a" />
            <path d="M5 14Q9.500 7.500 16 7.500Q22.500 7.500 27 14M9 18Q12 13.500 16 13.500Q20 13.500 23 18" />
            <circle cx="16" cy="20.500" r="3" fill="#fff" stroke="none" />
          </Stroke>
        </TrayItem>
        <TrayItem $gap={16}>
          <Stroke w={32} h={28} color="#fff" sw={2.200}>
            <path d="M2 10H7L13 3.500V24.500L7 18H2Q1 18 1 17V11Q1 10 2 10Z" />
            <path d="M17.500 9.500Q20 14 17.500 18.500M21.500 6Q26 14 21.500 22" />
            <path d="M25.500 2Q35.500 14 25.500 27" stroke="#6a665a" />
          </Stroke>
        </TrayItem>
        <TrayItem $gap={16}>
          <svg width="32" height="28" viewBox="0 0 32 28" fill="#fff">
            <path d="M10 7H23Q27 7 27 11V21Q27 25.500 23 25.500H5Q1 25.500 1 21V17" fill="none" stroke="#fff" strokeWidth="2.200" />
            <path d="M11 10H22Q24 10 24 12V20Q24 22.500 22 22.500H5Q4 22.500 4 20L9 15ZM29 12Q32 12 32 16Q32 19 29 19ZM6 0 0 12H4.500L3.500 20 10 9H5.500Z" />
          </svg>
        </TrayItem>
        <TrayText $gap={26} $width={130} $align="right" $track={-0.02}>4:40 PM<br />10/23/2024</TrayText>
        <TrayItem $gap={18}>
          <Stroke w={26} h={28} color="#fff" sw={2.200}>
            <path d="M4 18V11Q4 1.200 13 1.200Q22 1.200 22 11V18L25 23H1Z" strokeLinejoin="round" />
            <path d="M9.500 24Q10 27.500 13 27.500Q16 27.500 16.500 24" />
          </Stroke>
        </TrayItem>
      </Tray>
    </Taskbar>
  );
}

export default function App() {
  return (
    <>
      <GlobalStyle />
      <Screen>
        <BrowserChrome />
        <ChatPage />
        <WindowsTaskbar />
      </Screen>
    </>
  );
}
